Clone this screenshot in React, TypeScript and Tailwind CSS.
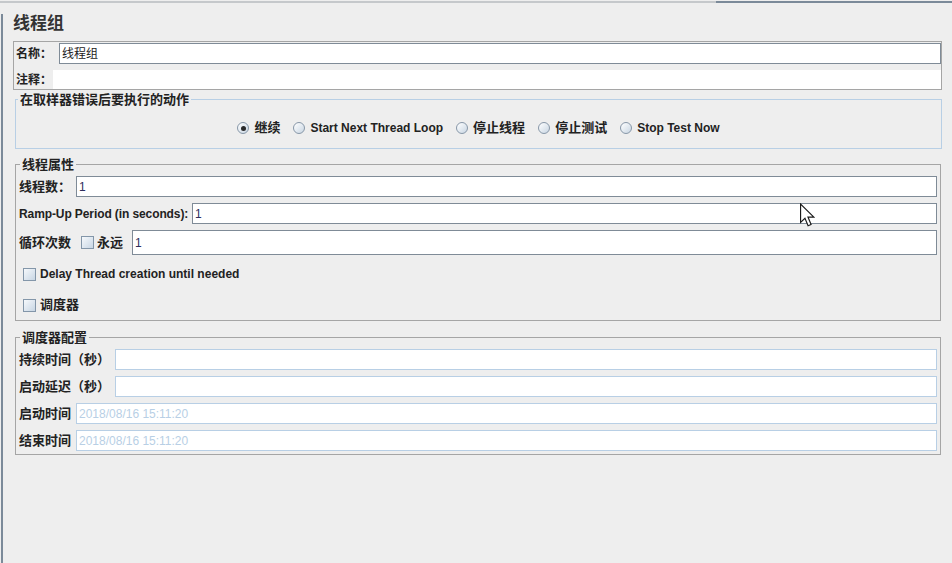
import React from 'react';

const font = "font-['Liberation_Sans','Noto_Sans_CJK_SC',sans-serif]";

const Radio: React.FC<{ checked?: boolean; label: string; latin?: boolean }> = ({ checked, label, latin }) => (
  <div className="flex items-center gap-[5px]">
    <span className="flex h-[12px] w-[12px] items-center justify-center rounded-full border border-[#8797a8] bg-linear-to-br from-white to-[#c9d6e3]">
      {checked && <span className="h-[5px] w-[5px] rounded-full bg-[#2a2a2a]" />}
    </span>
    <span className={`${latin ? 'text-[12px]' : 'text-[13px]'} font-bold leading-[16px] text-[#222]`}>{label}</span>
  </div>
);

const Check: React.FC = () => (
  <span className="h-[13px] w-[13px] shrink-0 border border-[#8396a9] bg-linear-to-br from-[#f6f9fc] to-[#c8d6e4]" />
);

const Field: React.FC<{ value?: string; tall?: boolean }> = ({ value, tall }) => (
  <div
    className={`flex flex-1 items-center border border-[#7f8b97] bg-white pl-[2px] text-[12px] text-[#2d2d5c] ${
      tall ? 'h-[25px]' : 'h-[21px]'
    }`}
  >
    {value}
  </div>
);

const DateField: React.FC<{ placeholder?: string }> = ({ placeholder }) => (
  <div className="flex h-[21px] flex-1 items-center border border-[#b8cfe5] bg-white pl-[2px] text-[12px] text-[#b8cfe5]">
    {placeholder}
  </div>
);

const Label: React.FC<{ w: string; latin?: boolean; children: React.ReactNode }> = ({ w, latin, children }) => (
  <span
    className={`${w} ${latin ? 'text-[12px] tracking-[-0.1px]' : 'text-[13px]'} shrink-0 whitespace-nowrap font-bold text-[#222]`}
  >
    {children}
  </span>
);

const App: React.FC = () => {
  return (
    <div className={`relative h-[563px] w-full overflow-hidden bg-[#eeeeee] ${font}`}>
      {/* top edge of the scroll pane */}
      <div className="mt-px flex h-[2px]">
        <div className="w-[716px] bg-[#c5c8cb]" />
        <div className="flex-1 bg-[#7b8a99]" />
      </div>

      <div className="ml-px h-[560px] border-l-2 border-[#7b8a99]">
        {/* Title */}
        <div className="ml-[10px] mt-[11px] text-[17px] font-bold leading-[20px] text-[#333]">线程组</div>

        {/* Name / comment */}
        <div className="ml-[10px] mt-[7px] flex w-[929px] flex-col border border-[#a5a5a5] pt-px">
          <div className="flex h-[21px] items-center">
            <span className="w-[45px] shrink-0 pl-[2px] text-[12px] font-bold text-[#222]">名称：</span>
            <div className="flex h-full flex-1 items-center border border-[#7f8b97] bg-white pl-[2px] text-[12px] text-[#222]">
              线程组
            </div>
          </div>
          <div className="mt-[6px] flex h-[19px] items-center">
            <span className="w-[39px] shrink-0 pl-[2px] text-[12px] font-bold text-[#222]">注释：</span>
            <div className="h-full flex-1 bg-white" />
          </div>
        </div>

        {/* Action on sampler error */}
        <fieldset className="ml-[12px] mt-[2px] w-[927px] border border-[#b8cfe5] pb-[12px]">
          <legend className="ml-[2px] px-[2px] text-[13px] font-bold leading-[15px] text-[#222]">
            在取样器错误后要执行的动作
          </legend>
          <div className="mt-[13px] flex h-[16px] items-center justify-center gap-[13px]">
            <Radio checked label="继续" />
            <Radio latin label="Start Next Thread Loop" />
            <Radio label="停止线程" />
            <Radio label="停止测试" />
            <Radio latin label="Stop Test Now" />
          </div>
        </fieldset>

        {/* Thread properties */}
        <fieldset className="ml-[12px] mt-[8px] w-[926px] border border-[#a5a5a5] pb-[7px] pl-[3px] pr-[3px]">
          <legend className="ml-[1px] px-[2px] text-[13px] font-bold leading-[15px] text-[#222]">线程属性</legend>
          <div className="mt-[4px] flex flex-col gap-[6px]">
            <div className="flex items-center">
              <Label w="w-[57px]">线程数：</Label>
              <Field value="1" />
            </div>
            <div className="flex items-center">
              <Label w="w-[173px]" latin>
                Ramp-Up Period (in seconds):
              </Label>
              <Field value="1" />
            </div>
            <div className="flex items-center">
              <Label w="w-[62px]">循环次数</Label>
              <Check />
              <span className="ml-[3px] w-[35px] shrink-0 text-[13px] font-bold text-[#222]">永远</span>
              <Field value="1" tall />
            </div>
          </div>
          <div className="ml-[4px] mt-[11px] flex h-[16px] items-center gap-[4px]">
            <Check />
            <span className="text-[12px] font-bold text-[#222]">Delay Thread creation until needed</span>
          </div>
          <div className="ml-[4px] mt-[15px] flex h-[16px] items-center gap-[4px]">
            <Check />
            <span className="text-[13px] font-bold text-[#222]">调度器</span>
          </div>
        </fieldset>

        {/* Scheduler configuration */}
        <fieldset className="ml-[12px] mt-[9px] w-[926px] border border-[#a5a5a5] pb-[3px] pl-[3px] pr-[3px]">
          <legend className="ml-[1px] px-[2px] text-[13px] font-bold leading-[15px] text-[#222]">调度器配置</legend>
          <div className="mt-[4px] flex flex-col gap-[6px]">
            <div className="flex items-center">
              <Label w="w-[96px]">持续时间（秒）</Label>
              <DateField />
            </div>
            <div className="flex items-center">
              <Label w="w-[96px]">启动延迟（秒）</Label>
              <DateField />
            </div>
            <div className="flex items-center">
              <Label w="w-[57px]">启动时间</Label>
              <DateField placeholder="2018/08/16 15:11:20" />
            </div>
            <div className="flex items-center">
              <Label w="w-[57px]">结束时间</Label>
              <DateField placeholder="2018/08/16 15:11:20" />
            </div>
          </div>
        </fieldset>
      </div>

      {/* mouse pointer */}
      <svg className="absolute left-[800px] top-[203px]" width="15" height="24" viewBox="0 0 13 20">
        <path
          d="M0.5 0.5 L0.5 16.5 L4.3 12.8 L7 19.3 L9.6 18.2 L6.9 11.8 L12 11.8 Z"
          fill="#fff"
          stroke="#1a1a1a"
          strokeWidth="1"
          strokeLinejoin="miter"
        />
      </svg>
    </div>
  );
};

export default App;
